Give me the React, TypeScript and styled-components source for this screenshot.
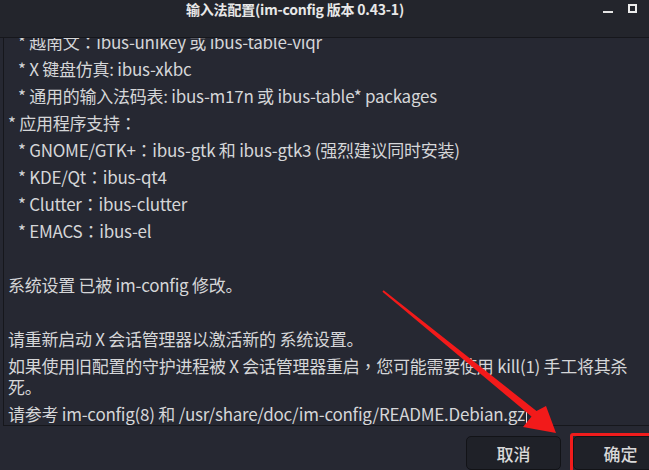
import React, { FC } from 'react';
import styled, { createGlobalStyle } from 'styled-components';

const GlobalStyle = createGlobalStyle`
  html, body {
    margin: 0;
    padding: 0;
    background: #262832;
  }
  body {
    font-family: "Noto Sans CJK SC", "Noto Sans", sans-serif;
  }
`;

const Screen = styled.div`
  position: relative;
  width: 649px;
  height: 470px;
  overflow: hidden;
`;

const Dialog = styled.div`
  width: 680px;
  height: 470px;
  display: flex;
  flex-direction: column;
  background: #262832;
`;

const TitleBar = styled.header`
  height: 37px;
  flex-shrink: 0;
  display: flex;
  align-items: flex-start;
  background: #23252c;
  border-bottom: 1px solid #16171c;
`;

const Title = styled.h1`
  flex: 1;
  margin: 0;
  padding-top: 1px;
  text-align: center;
  font-size: 14px;
  font-weight: 700;
  line-height: 16px;
  letter-spacing: -0.2px;
  color: #e8e8e8;
`;

const WindowControls = styled.div`
  width: 90px;
  display: flex;
  align-items: flex-start;
  gap: 15px;
  padding-left: 13px;
  box-sizing: border-box;
`;

const MinimizeGlyph = styled.span`
  width: 10px;
  height: 2px;
  margin-top: 11px;
  background: #e4e4e4;
`;

const MaximizeGlyph = styled.span`
  width: 9px;
  height: 9px;
  margin-top: 4px;
  border: 2px solid #ececec;
  box-sizing: border-box;
`;

const Content = styled.div`
  padding: 0 3px;
`;

const TextArea = styled.div`
  height: 388px;
  box-sizing: border-box;
  padding: 0 4px;
  border: 1px solid #16171c;
  border-top: none;
  background: #262832;
  overflow: hidden;
`;

const TextLines = styled.div`
  margin-top: -10px;
`;

const Line = styled.p<{ $indent?: boolean }>`
  margin: 0;
  padding: 3px 0 3px ${p => (p.$indent ? 10 : 0)}px;
  min-height: 21px;
  font-size: 17px;
  line-height: 21px;
  letter-spacing: -0.25px;
  color: #d5d6d8;
  white-space: pre-wrap;
`;

/* full-width punctuation set centred in its cell, as the GTK font does */
const Punct = styled.span`
  font-family: "Noto Sans CJK TC", "Noto Sans CJK SC", sans-serif;
`;

const Caret = styled.span`
  display: inline-block;
  width: 1px;
  height: 19px;
  margin-left: 1px;
  vertical-align: -4px;
  background: #e0e0e0;
`;

const ButtonRow = styled.footer`
  display: flex;
  justify-content: flex-end;
  gap: 12px;
  padding: 10px 12px 0 0;
`;

const DialogButton = styled.button<{ $marked?: boolean }>`
  position: relative;
  width: 95px;
  height: 34px;
  padding: 0;
  border: 1px solid #121317;
  border-radius: 5px;
  background: #1f2128;
  color: #d8d8d8;
  font-family: inherit;
  font-size: 17px;
  font-weight: 500;

  ${p => p.$marked && `
    &::after {
      content: '';
      position: absolute;
      inset: -4px;
      border: 3px solid #f01c1c;
      border-radius: 3px;
    }
  `}
`;

const Annotation = styled.svg`
  position: absolute;
  inset: 0;
  pointer-events: none;
`;

const withPunct = (text: string) =>
  text.split(/([：，])/).map((part, i) =>
    part === '：' || part === '，' ? <Punct key={i}>{part}</Punct> : part
  );

const lines: { text: string; indent?: boolean }[] = [
  { text: '* 越南文：ibus-unikey 或 ibus-table-viqr', indent: true },
  { text: '* X 键盘仿真: ibus-xkbc', indent: true },
  { text: '* 通用的输入法码表: ibus-m17n 或 ibus-table* packages', indent: true },
  { text: '* 应用程序支持：' },
  { text: '* GNOME/GTK+：ibus-gtk 和 ibus-gtk3 (强烈建议同时安装)', indent: true },
  { text: '* KDE/Qt：ibus-qt4', indent: true },
  { text: '* Clutter：ibus-clutter', indent: true },
  { text: '* EMACS：ibus-el', indent: true },
  { text: '' },
  { text: '系统设置 已被 im-config 修改。' },
  { text: '' },
  { text: '请重新启动 X 会话管理器以激活新的 系统设置。' },
];

const App: FC = () => (
  <Screen>
    <GlobalStyle />
    <Dialog>
      <TitleBar>
        <Title>输入法配置(im-config 版本 0.43-1)</Title>
        <WindowControls>
          <MinimizeGlyph />
          <MaximizeGlyph />
        </WindowControls>
      </TitleBar>
      <Content>
        <TextArea>
          <TextLines>
            {lines.map((l, i) => (
              <Line key={i} $indent={l.indent}>{withPunct(l.text)}</Line>
            ))}
            <Line>
              {withPunct('如果使用旧配置的守护进程被 X 会话管理器重启，您可能需要使用 kill(1) 手工将其杀')}
              <br />
              死。
            </Line>
            <Line>
              请参考 im-config(8) 和 /usr/share/doc/im-config/README.Debian.gz<Caret />
            </Line>
          </TextLines>
        </TextArea>
      </Content>
      <ButtonRow>
        <DialogButton>取消</DialogButton>
        <DialogButton $marked>确定</DialogButton>
      </ButtonRow>
    </Dialog>
    <Annotation width="649" height="470" viewBox="0 0 649 470">
      <polygon
        points="383.6,290.2 536.5,411 546,406 556,433 523,427 531.5,416.5 382.4,291.8"
        fill="#f21a1a"
      />
    </Annotation>
  </Screen>
);

export default App;
